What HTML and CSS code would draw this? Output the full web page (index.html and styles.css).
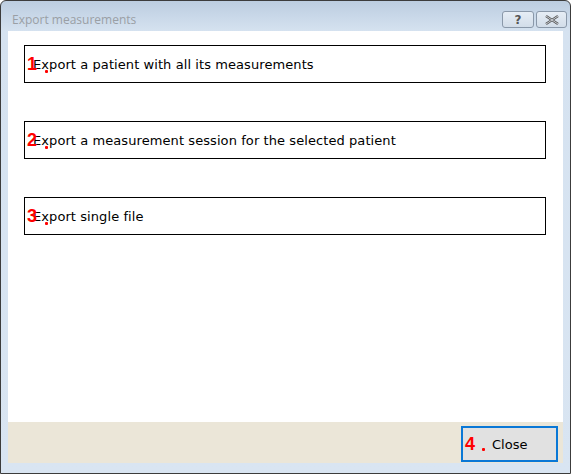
FILE: index.html
```html
<!DOCTYPE html>
<html>
<head>
<meta charset="utf-8">
<link rel="stylesheet" href="styles.css">
</head>
<body>
<div class="window">
  <div class="titlebar">
    <span class="title">Export measurements</span>
    <div class="tbtns">
      <span class="tbtn">?</span>
      <span class="tbtn close-x">
        <svg width="14" height="10" viewBox="0 0 14 10"><path d="M1 1 L13 9 M13 1 L1 9" stroke="#555" stroke-width="2.4" fill="none"/><path d="M1 1 L13 9 M13 1 L1 9" stroke="#e8eef5" stroke-width="0.8" fill="none"/></svg>
      </span>
    </div>
  </div>
  <div class="client">
    <div class="content">
      <div class="option"><span class="num">1</span><span class="dot"></span>Export a patient with all its measurements</div>
      <div class="option"><span class="num">2</span><span class="dot"></span>Export a measurement session for the selected patient</div>
      <div class="option"><span class="num">3</span><span class="dot"></span>Export single file</div>
    </div>
    <div class="footer">
      <div class="btn"><span class="bnum">4</span><span class="bdot"></span>Close</div>
    </div>
  </div>
</div>
</body>
</html>
```
FILE: styles.css
```css
html, body { margin: 0; padding: 0; }
body { width: 571px; height: 474px; overflow: hidden; background: #fff; }
.window {
  box-sizing: border-box;
  width: 571px; height: 474px;
  border: 1px solid #3c3c3c;
  border-radius: 6px 6px 0 0;
  background: linear-gradient(#bccde0 0px, #d5e2f0 30px, #d9e5f2 100%);
  display: flex; flex-direction: column;
  padding: 0 7px 10px 7px;
}
.titlebar { height: 30px; display: flex; align-items: flex-start; justify-content: space-between; }
.title {
  font-family: "Open Sans", "DejaVu Sans", sans-serif; font-size: 12px; color: #9a9fa5;
  margin: 10px 0 0 4px;
}
.tbtns { display: flex; gap: 2px; margin: 10px -4px 0 0; }
.tbtn {
  box-sizing: border-box; width: 32px; height: 17px;
  border: 1px solid #8a98a9; border-radius: 3px;
  background: linear-gradient(#e6edf5, #d2dde9);
  font-family: "DejaVu Sans", sans-serif; font-size: 12px; font-weight: bold; color: #555;
  display: flex; align-items: center; justify-content: center; line-height: 1;
}
.close-x { width: 31px; }
.client { flex: 1; display: flex; flex-direction: column; background: #fff; }
.content { flex: 1; padding: 14px 17px 0 16px; display: flex; flex-direction: column; gap: 38px; }
.option {
  position: relative;
  box-sizing: border-box; height: 38px;
  border: 1px solid #000;
  font-family: "DejaVu Sans", Verdana, sans-serif; font-size: 13px; color: #000;
  letter-spacing: 0.08px;
  display: flex; align-items: center; padding-left: 8px;
}
.num, .bnum {
  position: absolute; left: 2px; top: 9px;
  font-family: "Liberation Sans", sans-serif; font-weight: bold; font-size: 18px; color: #f00;
  line-height: 18px;
}
.dot, .bdot {
  position: absolute; left: 20px; top: 24px;
  width: 3px; height: 3px; border-radius: 1px; background: #f00;
}
.footer { height: 41px; background: #ebe6d8; display: flex; justify-content: flex-end; align-items: flex-end; padding: 0 5px 1px 0; box-sizing: border-box; }
.btn {
  position: relative;
  box-sizing: border-box; width: 97px; height: 36px;
  border: 2px solid #0a78d6; background: #e1e1e1;
  font-family: "DejaVu Sans", Verdana, sans-serif; font-size: 13px; color: #000;
  display: flex; align-items: center; padding-left: 29px;
}
.bnum { left: 2px; top: 7px; }
.bdot { left: 19px; top: 20px; }
```
